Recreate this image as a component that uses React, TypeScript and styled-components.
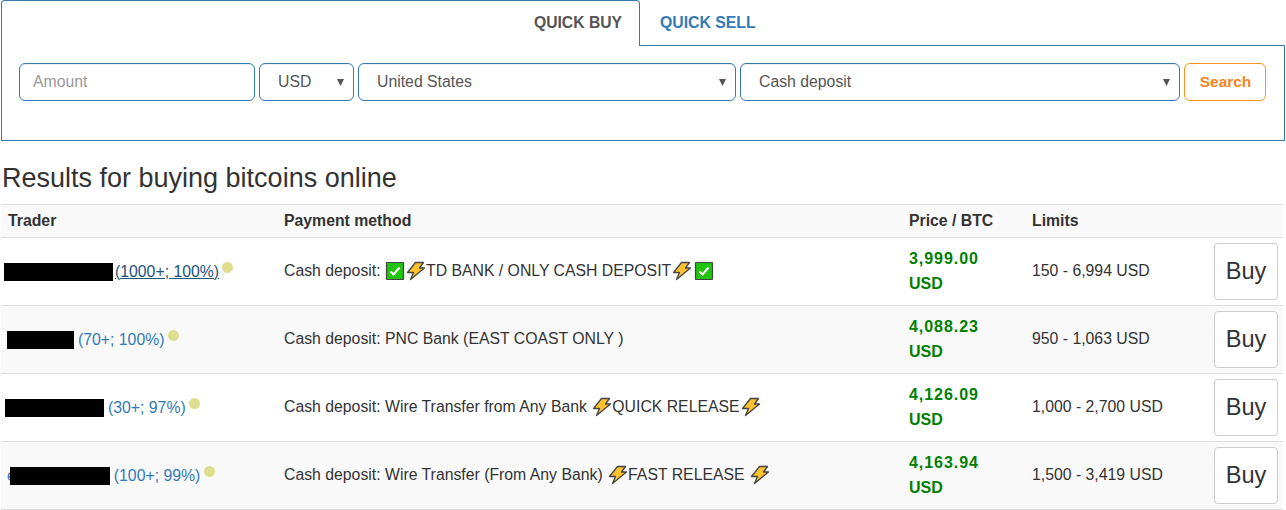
import React from "react";
import styled, { createGlobalStyle } from "styled-components";

const Global = createGlobalStyle`
  html, body { margin: 0; padding: 0; background: #fff; }
  body { font-family: "Liberation Sans", Arial, sans-serif; font-size: 15.8px; color: #333; }
  * { box-sizing: border-box; }
`;

const Page = styled.div`
  width: 1286px;
  height: 510px;
  overflow: hidden;
  padding: 0 1px;
`;

const Tabs = styled.div`
  height: 46px;
  display: flex;
`;

const ActiveTab = styled.div`
  width: 639px;
  height: 46px;
  border: 1px solid #337ab7;
  border-bottom: 0;
  border-radius: 4px 4px 0 0;
  padding: 13px 17px 0 0;
  font-size: 15.7px;
  font-weight: 700;
  line-height: 18px;
  text-align: right;
  color: #555;
  background: #fff;
`;

const InactiveTab = styled.div`
  flex: 1;
  height: 46px;
  border-bottom: 1px solid #337ab7;
  padding: 14px 0 0 20px;
  font-size: 15.8px;
  font-weight: 700;
  line-height: 18px;
  color: #337ab7;
`;

const Panel = styled.section`
  height: 95px;
  border: 1px solid #337ab7;
  border-top: 0;
  background: #fff;
`;

const SearchRow = styled.div`
  display: flex;
  gap: 4px;
  padding: 17px 18px 0 17px;
`;

const Field = styled.div<{ $w: number; $pad?: number; $placeholder?: boolean }>`
  width: ${(p) => p.$w}px;
  height: 38px;
  border: 1px solid #337ab7;
  border-radius: 6px;
  padding-left: ${(p) => p.$pad ?? 18}px;
  display: flex;
  align-items: center;
  justify-content: space-between;
  font-size: 15.8px;
  color: ${(p) => (p.$placeholder ? "#999" : "#555")};
  box-shadow: inset 0 1px 1px rgba(0, 0, 0, 0.075);
  background: #fff;
`;

const Caret = styled.svg`
  width: 7px;
  height: 7px;
  margin-right: 9px;
  flex: none;
  fill: #555;
`;

const SearchButton = styled.button`
  width: 82px;
  height: 38px;
  border: 1px solid #f7931e;
  border-radius: 6px;
  background: #fff;
  color: #f7841e;
  font: 700 15.4px "Liberation Sans", Arial, sans-serif;
  padding: 0 0 1px 1px;
`;

const Title = styled.h3`
  margin: 21px 0 0 1px;
  height: 42px;
  font-size: 27px;
  font-weight: 400;
  line-height: 32px;
  color: #333;
`;

const Table = styled.div`
  width: 1282px;
  border-bottom: 1px solid #ddd;
`;

const Row = styled.div<{ $striped?: boolean; $head?: boolean }>`
  display: grid;
  grid-template-columns: 275px 625px 123px 174px 1fr;
  align-items: center;
  height: ${(p) => (p.$head ? "33px" : "68px")};
  border-top: 1px solid #ddd;
  background: ${(p) => (p.$striped ? "#f9f9f9" : "#fff")};
`;

const HeadCell = styled.div`
  padding-left: 8px;
  font-weight: 700;
  line-height: 32px;
  &:first-child { padding-left: 7px; }
`;

const TraderCell = styled.div`
  display: flex;
  align-items: center;
  white-space: nowrap;
`;

const Redact = styled.span<{ $w: number; $ml: number }>`
  display: block;
  width: ${(p) => p.$w}px;
  height: 18px;
  margin-left: ${(p) => p.$ml}px;
  background: #000;
  flex: none;
  z-index: 1;
`;

const NameStart = styled.span`
  display: block;
  margin-left: 6px;
  color: #337ab7;
  flex: none;
`;

const TraderLink = styled.a<{ $under?: boolean }>`
  color: ${(p) => (p.$under ? "#23527c" : "#337ab7")};
  text-decoration: ${(p) => (p.$under ? "underline" : "none")};
  margin-left: ${(p) => (p.$under ? 2 : 4)}px;
  line-height: 20px;
`;

const Dot = styled.span<{ $ml: number }>`
  width: 11px;
  height: 11px;
  border-radius: 50%;
  margin: -8px 0 0 ${(p) => p.$ml}px;
  background: #dede8e;
  flex: none;
`;

const Method = styled.div`
  padding: 0 0 2px 8px;
  display: flex;
  align-items: center;
  white-space: pre;
`;

const Price = styled.div`
  padding: 0 0 2px 8px;
  color: #008000;
  font-weight: 700;
  font-size: 16px;
  line-height: 25px;
`;

const PriceValue = styled.span`
  letter-spacing: 0.95px;
`;

const Limits = styled.div`
  padding: 0 0 2px 8px;
`;

const BuyCell = styled.div`
  display: flex;
  justify-content: flex-end;
  padding-right: 5px;
`;

const BuyButton = styled.button`
  width: 64px;
  height: 57px;
  border: 1px solid #ccc;
  border-radius: 4px;
  background: #fff;
  color: #333;
  font: 400 23.6px "Liberation Sans", Arial, sans-serif;
  padding: 0;
`;

const IconSvg = styled.svg<{ $ml?: number }>`
  width: 20px;
  height: 20px;
  margin-left: ${(p) => p.$ml ?? 0}px;
  flex: none;
`;

const Check = ({ ml }: { ml?: number }) => (
  <IconSvg viewBox="0 0 20 20" $ml={ml}>
    <rect x="1.5" y="1.5" width="17" height="17" rx="0.5" fill="#21c40f" stroke="#444" strokeWidth="1.2" />
    <path d="M5.5 10.5l3 3 6-7" fill="none" stroke="#fff" strokeWidth="2" />
  </IconSvg>
);

const Bolt = () => (
  <IconSvg viewBox="0 0 20 20" $ml={1}>
    <path
      d="M9.5 1.5 H17.5 L13.5 7 H18.5 L4.5 18.5 L7.5 11.5 H1.5 Z"
      fill="#fdc22d"
      stroke="#444"
      strokeWidth="1.3"
      strokeLinejoin="round"
    />
  </IconSvg>
);

const CaretDown = () => (
  <Caret viewBox="0 0 7 7">
    <path d="M0 0h7L3.5 7z" />
  </Caret>
);

const rows = [
  {
    w: 109, ml: 3, dot: 3, stats: "(1000+; 100%)", under: true,
    method: <>Cash deposit: <Check /><Bolt />TD BANK / ONLY CASH DEPOSIT<Bolt /><Check ml={2} /></>,
    price: "3,999.00", limits: "150 - 6,994 USD",
  },
  {
    w: 67, ml: 6, dot: 3, stats: "(70+; 100%)",
    method: <>Cash deposit: PNC Bank (EAST COAST ONLY )</>,
    price: "4,088.23", limits: "950 - 1,063 USD",
  },
  {
    w: 99, ml: 4, dot: 3, stats: "(30+; 97%)",
    method: <>Cash deposit: Wire Transfer from Any Bank <Bolt />QUICK RELEASE<Bolt /></>,
    price: "4,126.09", limits: "1,000 - 2,700 USD",
  },
  {
    w: 100, ml: -6, dot: 4, nameStart: "e", stats: "(100+; 99%)",
    method: <>Cash deposit: Wire Transfer (From Any Bank) <Bolt />FAST RELEASE <Bolt /></>,
    price: "4,163.94", limits: "1,500 - 3,419 USD",
  },
];

export default function App() {
  return (
    <Page>
      <Global />
      <Tabs>
        <ActiveTab>QUICK BUY</ActiveTab>
        <InactiveTab>QUICK SELL</InactiveTab>
      </Tabs>
      <Panel>
        <SearchRow>
          <Field $w={236} $pad={13} $placeholder>Amount</Field>
          <Field $w={95} $pad={18}>USD<CaretDown /></Field>
          <Field $w={378}>United States<CaretDown /></Field>
          <Field $w={440}>Cash deposit<CaretDown /></Field>
          <SearchButton>Search</SearchButton>
        </SearchRow>
      </Panel>
      <Title>Results for buying bitcoins online</Title>
      <Table>
        <Row $striped $head>
          <HeadCell>Trader</HeadCell>
          <HeadCell>Payment method</HeadCell>
          <HeadCell>Price / BTC</HeadCell>
          <HeadCell>Limits</HeadCell>
          <HeadCell />
        </Row>
        {rows.map((r, i) => (
          <Row key={r.price} $striped={i % 2 === 1}>
            <TraderCell>
              {r.nameStart && <NameStart>{r.nameStart}</NameStart>}
              <Redact $w={r.w} $ml={r.ml} />
              <TraderLink $under={r.under}>{r.stats}</TraderLink>
              <Dot $ml={r.dot} />
            </TraderCell>
            <Method>{r.method}</Method>
            <Price><PriceValue>{r.price}</PriceValue><br />USD</Price>
            <Limits>{r.limits}</Limits>
            <BuyCell><BuyButton>Buy</BuyButton></BuyCell>
          </Row>
        ))}
      </Table>
    </Page>
  );
}
